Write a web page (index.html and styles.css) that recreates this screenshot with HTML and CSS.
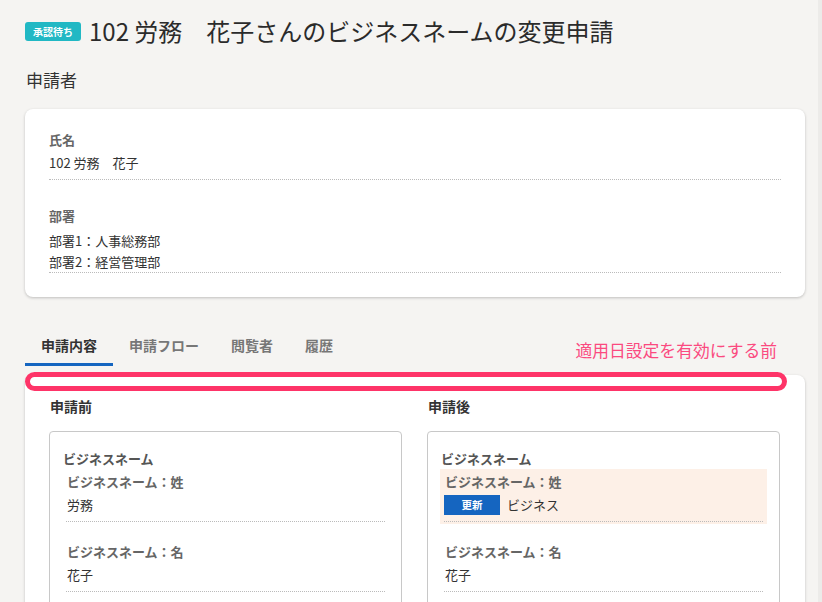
FILE: index.html
```html
<!DOCTYPE html>
<html lang="ja">
<head>
    <meta charset="UTF-8">
    <meta name="viewport" content="width=device-width, initial-scale=1.0">
    <title>ビジネスネームの変更申請</title>
    <link rel="stylesheet" href="styles.css">
</head>
<body>
    <div class="page">
        <header class="title-row">
            <span class="status">承認待ち</span>
            <h1>102 労務　花子さんのビジネスネームの変更申請</h1>
        </header>

        <h2 class="section-title">申請者</h2>

        <section class="card applicant">
            <div class="info-item">
                <div class="info-label">氏名</div>
                <div class="info-value">102 労務　花子</div>
            </div>
            <div class="info-item">
                <div class="info-label">部署</div>
                <div class="info-value">部署1：人事総務部</div>
                <div class="info-value">部署2：経営管理部</div>
            </div>
        </section>

        <div class="tabs-area">
            <nav class="tabs">
                <a class="tab active">申請内容</a>
                <a class="tab">申請フロー</a>
                <a class="tab">閲覧者</a>
                <a class="tab">履歴</a>
            </nav>
            <span class="note">適用日設定を有効にする前</span>
        </div>

        <div class="content-area">
            <div class="note-frame"></div>
            <section class="card content">
                <div class="column">
                    <h3 class="column-title">申請前</h3>
                    <div class="box">
                        <div class="group-title">ビジネスネーム</div>
                        <div class="field">
                            <div class="field-inner">
                                <div class="field-label">ビジネスネーム：姓</div>
                                <div class="field-value">労務</div>
                            </div>
                        </div>
                        <div class="field">
                            <div class="field-inner">
                                <div class="field-label">ビジネスネーム：名</div>
                                <div class="field-value">花子</div>
                            </div>
                        </div>
                    </div>
                </div>
                <div class="column">
                    <h3 class="column-title">申請後</h3>
                    <div class="box">
                        <div class="group-title">ビジネスネーム</div>
                        <div class="field changed">
                            <div class="field-inner">
                                <div class="field-label">ビジネスネーム：姓</div>
                                <div class="field-value"><span class="tag">更新</span>ビジネス</div>
                            </div>
                        </div>
                        <div class="field">
                            <div class="field-inner">
                                <div class="field-label">ビジネスネーム：名</div>
                                <div class="field-value">花子</div>
                            </div>
                        </div>
                    </div>
                </div>
            </section>
        </div>
    </div>
</body>
</html>
```

FILE: styles.css
```css
html, body {
  margin: 0;
  background: #f5f4f2;
  font-family: "Noto Sans CJK JP", "Noto Sans", sans-serif;
  color: #333;
}

.page {
  padding: 0 13px 0 25px;
  border-right: 4px solid #ecebe9;
  height: 602px;
  overflow: hidden;
  box-sizing: border-box;
}

/* Title */
.title-row {
  display: flex;
  align-items: center;
  gap: 8px;
  padding-top: 17px;
}

.status {
  display: inline-block;
  background: #21b8c4;
  color: #fff;
  font-size: 10px;
  font-weight: bold;
  line-height: 19px;
  padding: 0 8px;
  border-radius: 3px;
}

.title-row h1 {
  margin: 0;
  font-size: 24px;
  font-weight: normal;
  line-height: 28px;
  color: #2b2b2b;
}

.section-title {
  margin: 23px 0 17px 1px;
  font-size: 17px;
  font-weight: normal;
  line-height: 24px;
}

/* Cards */
.card {
  background: #fff;
  border-radius: 8px;
  box-shadow: 0 1px 3px rgba(0, 0, 0, 0.22);
}

.applicant {
  padding: 21px 24px 24px 24px;
}

.info-item {
  border-bottom: 1px dotted #bbb;
  padding-bottom: 6px;
}

.info-item + .info-item {
  margin-top: 26px;
  padding-bottom: 0;
}

.info-label {
  font-size: 13px;
  font-weight: bold;
  color: #666;
  line-height: 20px;
  margin-bottom: 2px;
}

.info-item + .info-item .info-label {
  margin-bottom: 4px;
}

.info-value {
  font-size: 13px;
  line-height: 21px;
}

/* Tabs */
.tabs-area {
  position: relative;
  margin-top: 38px;
}

.tabs {
  display: flex;
}

.tab {
  padding: 0 16px 8px;
  font-size: 14px;
  font-weight: bold;
  line-height: 20px;
  color: #777;
  border-bottom: 3px solid transparent;
}

.tab.active {
  color: #333;
  border-bottom-color: #1565c0;
}

.note {
  position: absolute;
  right: 28px;
  top: 3px;
  font-size: 16.8px;
  color: #fb4a80;
}

/* Content */
.content-area {
  position: relative;
  margin-top: 9px;
}

.note-frame {
  position: absolute;
  left: 0;
  right: 18px;
  top: -3px;
  height: 9px;
  border: 5px solid #fe3468;
  border-radius: 10px;
  z-index: 1;
}

.content {
  display: grid;
  grid-template-columns: 1fr 1fr;
  gap: 25px;
  padding: 21px 25px 0 24px;
  border-radius: 8px 8px 0 0;
  min-height: 240px;
}

.column-title {
  margin: 0 0 15px 1px;
  font-size: 14px;
  font-weight: bold;
  line-height: 20px;
}

.box {
  border: 1px solid #c8c8c8;
  border-radius: 4px;
  padding: 17px 12px 20px;
  min-height: 200px;
}

.group-title {
  padding-left: 1px;
  font-size: 13px;
  font-weight: bold;
  line-height: 20px;
  color: #555;
}

.field {
  padding: 3px 4px 2px;
}

.field + .field {
  margin-top: 15px;
}

.field.changed {
  background: #fdf0e7;
}

.field-inner {
  border-bottom: 1px dotted #bbb;
  padding-bottom: 6px;
}

.field-label {
  font-size: 13px;
  font-weight: bold;
  line-height: 20px;
  color: #666;
  padding-left: 1px;
  margin-bottom: 3px;
}

.field-value {
  display: flex;
  align-items: center;
  gap: 7px;
  font-size: 13px;
  line-height: 20px;
  padding-left: 1px;
}

.tag {
  display: inline-block;
  width: 56px;
  text-align: center;
  background: #1565c0;
  color: #fff;
  font-size: 10.5px;
  font-weight: bold;
  line-height: 20px;
  margin-left: -1px;
}
```
